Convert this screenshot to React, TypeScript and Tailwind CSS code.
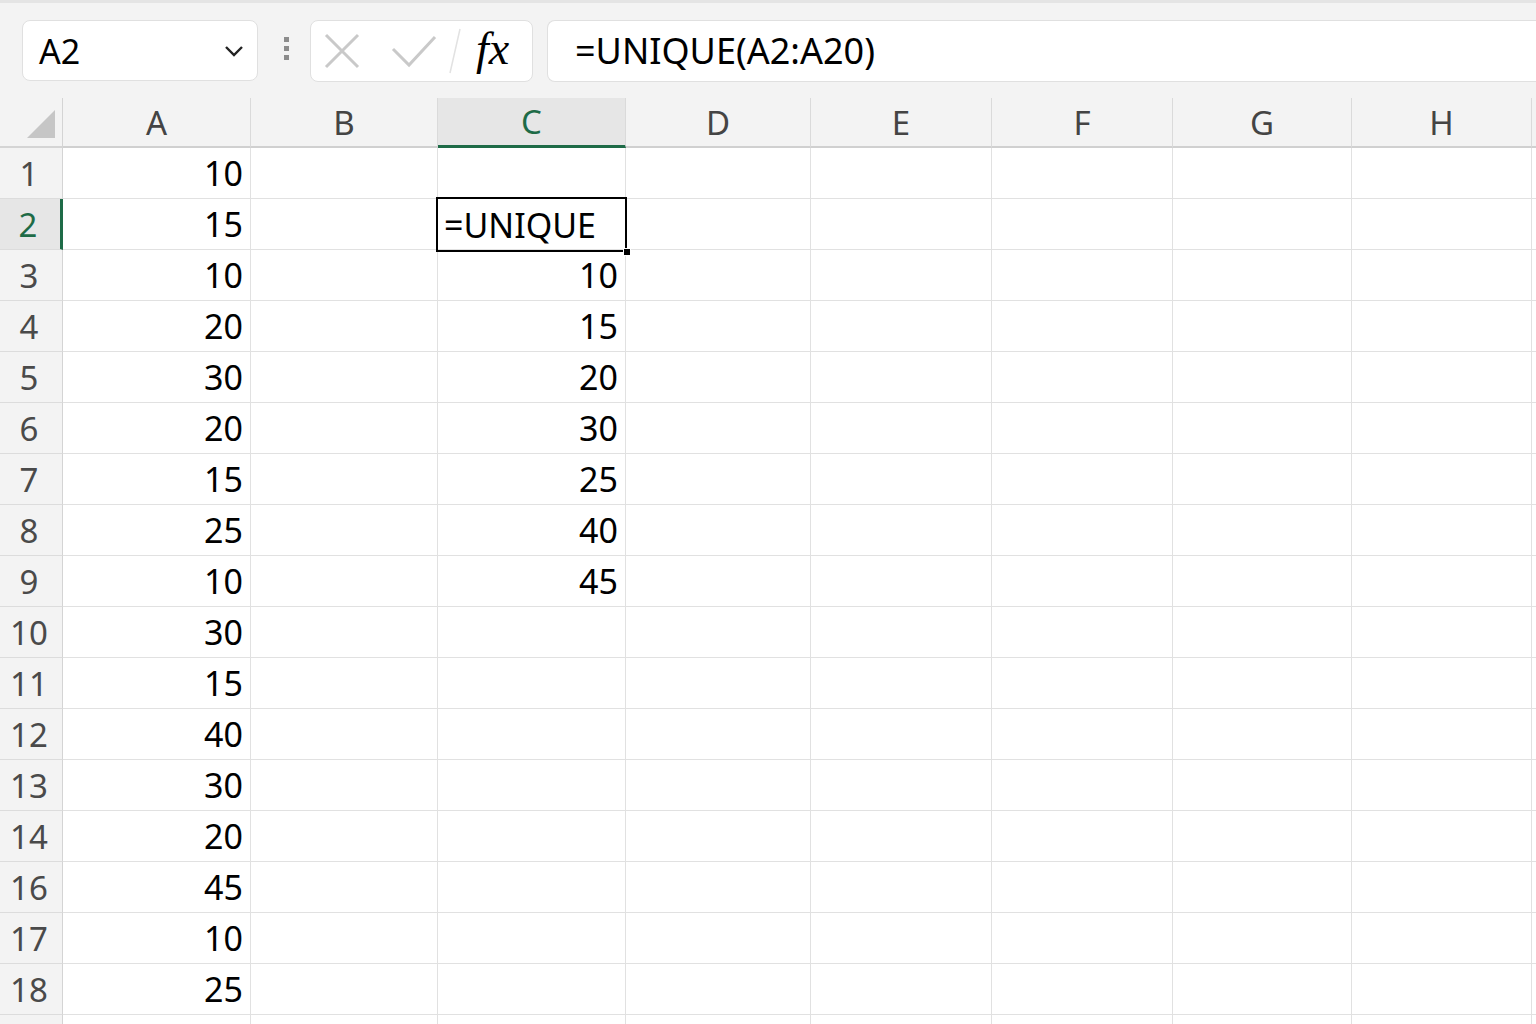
import React from "react";

const COLS = [
  { l: "A", w: "w-[188px]" },
  { l: "B", w: "w-[187px]" },
  { l: "C", w: "w-[188px]" },
  { l: "D", w: "w-[185px]" },
  { l: "E", w: "w-[181px]" },
  { l: "F", w: "w-[181px]" },
  { l: "G", w: "w-[179px]" },
  { l: "H", w: "w-[180px]" },
  { l: "", w: "w-[60px]" },
];

const ROWS = ["1", "2", "3", "4", "5", "6", "7", "8", "9", "10", "11", "12", "13", "14", "16", "17", "18", ""];
const A = ["10", "15", "10", "20", "30", "20", "15", "25", "10", "30", "15", "40", "30", "20", "45", "10", "25", ""];
const C = ["", "", "10", "15", "20", "30", "25", "40", "45"];

const font = "font-['Noto_Sans',sans-serif]";

function Toolbar() {
  return (
    <div className="h-[98px] bg-[#f3f3f3] border-t-[3px] border-[#e4e4e4] flex items-start pt-[17px]">
      <div className="ml-[22px] w-[236px] h-[61px] bg-white rounded-[8px] border border-[#e0e0e0] flex items-center justify-between pl-[16px] pr-[12px]">
        <span className="text-[34px] leading-none text-black">A2</span>
        <svg width="22" height="14" viewBox="0 0 22 14">
          <path d="M3 3 L11 11 L19 3" fill="none" stroke="#222" strokeWidth="2.4" />
        </svg>
      </div>
      <div className="ml-[26px] mt-[17px] flex flex-col gap-[4px]">
        <div className="w-[5px] h-[5px] bg-[#8c8c8c]" />
        <div className="w-[5px] h-[5px] bg-[#8c8c8c]" />
        <div className="w-[5px] h-[5px] bg-[#8c8c8c]" />
      </div>
      <div className="ml-[21px] w-[223px] h-[62px] bg-white rounded-[8px] border border-[#e0e0e0] flex items-center relative">
        <svg className="ml-[12px]" width="38" height="38" viewBox="0 0 38 38">
          <path d="M3 3 L35 35 M35 3 L3 35" stroke="#c9c9c9" strokeWidth="3" fill="none" />
        </svg>
        <svg className="ml-[29px]" width="48" height="34" viewBox="0 0 48 34">
          <path d="M3 15 L19 31 L45 3" stroke="#c9c9c9" strokeWidth="3" fill="none" />
        </svg>
        <svg className="ml-[10px]" width="14" height="48" viewBox="0 0 14 48">
          <path d="M12 2 L2 46" stroke="#e2e2e2" strokeWidth="1.5" fill="none" />
        </svg>
        <span className="ml-[14px] mt-[-4px] font-['Liberation_Serif',serif] italic text-[46px] leading-none text-black">fx</span>
      </div>
      <div className="ml-[14px] flex-1 h-[62px] bg-white rounded-l-[8px] border border-r-0 border-[#e0e0e0] flex items-center pl-[27px]">
        <span className="text-[36px] leading-none text-black">=UNIQUE(A2:A20)</span>
      </div>
    </div>
  );
}

function HeaderRow() {
  return (
    <div className="flex h-[50px] bg-[#f3f3f3]">
      <div className="w-[63px] shrink-0 border-r border-b-2 border-[#d4d4d4] relative">
        <svg className="absolute left-[27px] top-[12px]" width="28" height="28" viewBox="0 0 28 28">
          <path d="M28 0 L28 28 L0 28 Z" fill="#c6c6c6" />
        </svg>
      </div>
      {COLS.map((c) => {
        const sel = c.l === "C";
        return (
          <div
            key={c.l + "h"}
            className={`${c.w} shrink-0 border-r border-[#dadada] flex items-center justify-center text-[33px] leading-none ${
              sel ? "bg-[#e6e6e6] border-b-[3px] border-b-[#1e6b47] text-[#1e6b47]" : "border-b-2 border-b-[#d0d0d0] text-[#444]"
            }`}
          >
            {c.l}
          </div>
        );
      })}
    </div>
  );
}

function Row({ i }: { i: number }) {
  const label = ROWS[i];
  const selRow = i === 1;
  return (
    <div className="flex h-[51px]">
      <div
        className={`w-[63px] shrink-0 border-b border-[#dcdcdc] flex items-center justify-center pr-[4px] text-[33px] leading-none ${
          selRow ? "bg-[#e6e6e6] border-r-[3px] border-r-[#1e6b47] text-[#1e6b47]" : "bg-[#f3f3f3] border-r border-r-[#d4d4d4] text-[#4a4a4a]"
        }`}
      >
        {label}
      </div>
      {COLS.map((c, ci) => {
        let content: React.ReactNode = null;
        if (ci === 0) content = A[i];
        if (ci === 2) content = C[i] ?? "";
        const isSel = ci === 2 && i === 1;
        return (
          <div
            key={c.l + ci}
            className={`${c.w} shrink-0 border-r border-b border-[#e1e1e1] flex items-center justify-end pr-[7px] text-[34px] leading-none text-black relative`}
          >
            {isSel ? (
              <div className="absolute left-[-2px] top-[-2px] w-[191px] h-[55px] border-2 border-black flex items-center pl-[6px] z-10">
                <span>=UNIQUE</span>
                <div className="absolute right-[-6px] bottom-[-6px] w-[8px] h-[8px] bg-black border border-white" />
              </div>
            ) : (
              content
            )}
          </div>
        );
      })}
    </div>
  );
}

export default function App() {
  return (
    <div className={`w-[1536px] h-[1024px] overflow-hidden bg-white ${font}`}>
      <Toolbar />
      <HeaderRow />
      {ROWS.map((_, i) => (
        <Row key={i} i={i} />
      ))}
    </div>
  );
}
